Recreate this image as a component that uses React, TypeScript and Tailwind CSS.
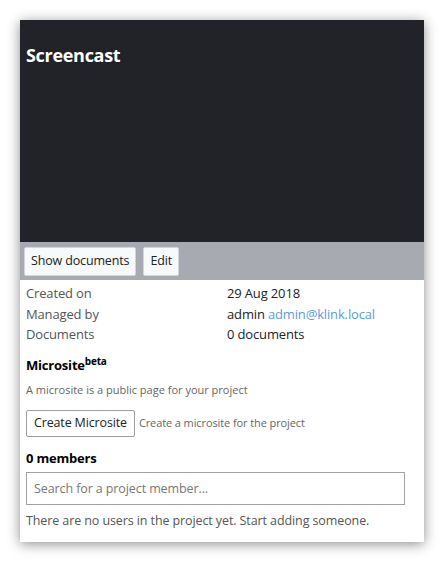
export default function App() {
  return (
    <div className="min-h-screen bg-white pt-[20px] pl-[20px]" style={{ fontFamily: '"Open Sans", "Noto Sans", sans-serif' }}>
      <div className="w-[404px] bg-white shadow-[0_2px_12px_rgba(0,0,0,0.45)]">
        {/* Header */}
        <div className="h-[222px] bg-[#212328] px-[6px] pt-[22px]">
          <h1 className="text-[18px] font-bold leading-[26px] tracking-[-0.3px] text-white">Screencast</h1>
        </div>

        {/* Toolbar */}
        <div className="flex h-[38px] items-center gap-[7px] bg-[#a7aab0] px-[4px]">
          <button className="h-[29px] rounded-[2px] border border-[#d4d6da] bg-[#f8f9fa] px-[6px] text-[12.5px] tracking-[-0.15px] text-[#222]">
            Show documents
          </button>
          <button className="h-[29px] rounded-[2px] border border-[#d4d6da] bg-[#f8f9fa] px-[6px] text-[12.5px] tracking-[-0.15px] text-[#222]">
            Edit
          </button>
        </div>

        {/* Details */}
        <div className="px-[6px] pt-[3px] pb-[11px]">
          <div className="grid grid-cols-[201px_1fr] text-[13px] leading-[20.5px] tracking-[-0.15px]">
            <span className="text-[#555]">Created on</span>
            <span className="text-[#222]">29 Aug 2018</span>
            <span className="text-[#555]">Managed by</span>
            <span className="text-[#222]">
              admin <a className="text-[#5b9be0]">admin@klink.local</a>
            </span>
            <span className="text-[#555]">Documents</span>
            <span className="text-[#222]">0 documents</span>
          </div>

          <h2 className="mt-[10px] text-[13px] font-bold leading-[20px] tracking-[-0.2px] text-black">
            Microsite<sup className="text-[10px] font-bold">beta</sup>
          </h2>
          <p className="mt-[7px] text-[11px] leading-[16px] text-[#666]">A microsite is a public page for your project</p>

          <div className="mt-[12px] flex items-center gap-[4px]">
            <button className="h-[27px] rounded-[2px] border border-[#9a9ea4] bg-white px-[7px] text-[12.5px] tracking-[-0.15px] text-[#222]">
              Create Microsite
            </button>
            <span className="text-[11px] tracking-[-0.1px] text-[#666]">Create a microsite for the project</span>
          </div>

          <h2 className="mt-[11px] text-[13px] font-bold leading-[20px] tracking-[-0.2px] text-black">0 members</h2>
          <input
            className="mt-[4px] h-[33px] w-[379px] border border-[#9ea3a8] px-[7px] text-[12.5px] tracking-[-0.1px] outline-none placeholder:text-[#777]"
            placeholder="Search for a project member..."
          />
          <p className="mt-[6px] text-[12.5px] leading-[20px] tracking-[-0.1px] text-[#555]">
            There are no users in the project yet. Start adding someone.
          </p>
        </div>
      </div>
    </div>
  );
}
